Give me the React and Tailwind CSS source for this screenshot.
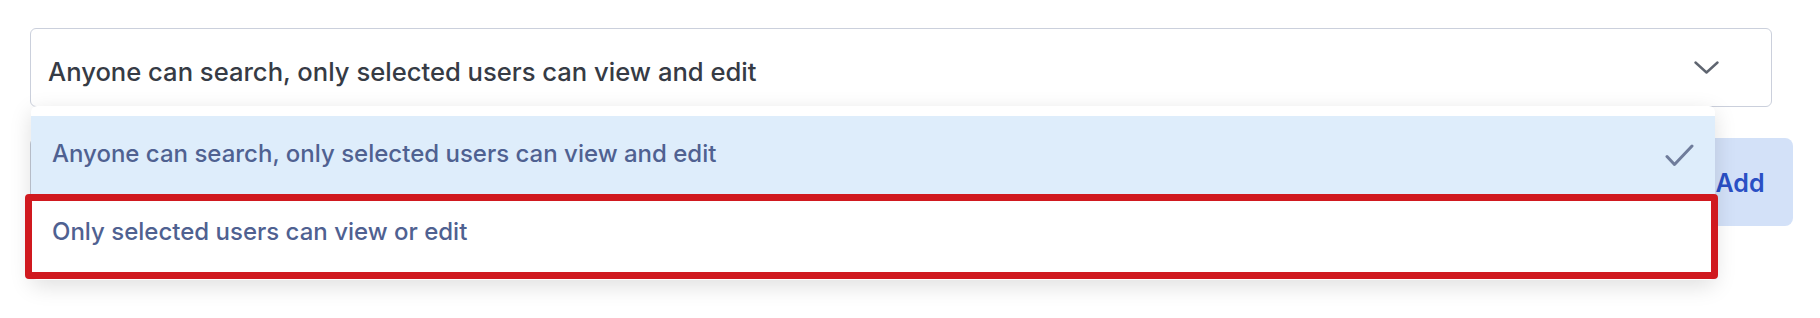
import React from "react";

const options = [
    { id: "search", label: "Anyone can search, only selected users can view and edit" },
    { id: "private", label: "Only selected users can view or edit" },
];

const Chevron = () => (
    <svg width="25" height="13" viewBox="0 0 25 13" fill="none">
        <polyline points="1.5,1.5 12.5,11.5 23.5,1.5" stroke="#5f6570" strokeWidth="2.4" strokeLinecap="round" strokeLinejoin="round" />
    </svg>
);

const Check = () => (
    <svg width="29" height="23" viewBox="0 0 29 23" fill="none">
        <polyline points="2,12.5 9.5,20.5 27,2" stroke="#6f7c9b" strokeWidth="3" strokeLinecap="round" strokeLinejoin="round" />
    </svg>
);

const App = () => {
    const selected = "search";

    return (
        <div className="relative w-[1820px] h-[318px] bg-white font-['Inter',sans-serif] overflow-hidden">
            <div className="pt-[28px] pl-[30px] pr-[27px]">
                {/* select trigger */}
                <div className="w-[1742px] h-[79px] border border-[#cbd0dc] rounded-[6px] bg-white flex items-center justify-between pl-[17px] pr-[52px]">
                    <span className="text-[25.6px] font-medium text-[#363b45] pt-[9px]">
                        {options[0].label}
                    </span>
                    <Chevron />
                </div>

                {/* input row under the menu */}
                <div className="flex gap-[12px] mt-[31px] h-[88px]">
                    <div className="flex-1 border border-[#c2c8d4] rounded-[6px] bg-white" />
                    <button className="w-[106px] rounded-[8px] bg-[#d3e1f8] text-[#2a4fc4] text-[25px] font-semibold flex items-center justify-center pt-[4px]">
                        Add
                    </button>
                </div>
            </div>

            {/* open dropdown */}
            <div className="absolute left-[31px] top-[106px] w-[1684px] bg-white rounded-[6px] pt-[10px] pb-[8px] shadow-[0_6px_22px_rgba(0,0,0,0.13)]">
                {options.map((opt) => (
                    <div
                        key={opt.id}
                        className={
                            opt.id === selected
                                ? "h-[78px] flex items-center justify-between pl-[21px] pr-[21px] bg-[#deedfb]"
                                : "h-[78px] flex items-center justify-between pl-[21px] pr-[21px] bg-white"
                        }
                    >
                        <span className="text-[24px] font-medium text-[#4f6191] pb-[3px]">{opt.label}</span>
                        {opt.id === selected && <Check />}
                    </div>
                ))}
            </div>

            {/* highlight box */}
            <div className="absolute left-[25px] top-[194px] w-[1693px] h-[85px] border-[7px] border-[#d0191f] rounded-[4px]" />
        </div>
    );
};

export default App;
